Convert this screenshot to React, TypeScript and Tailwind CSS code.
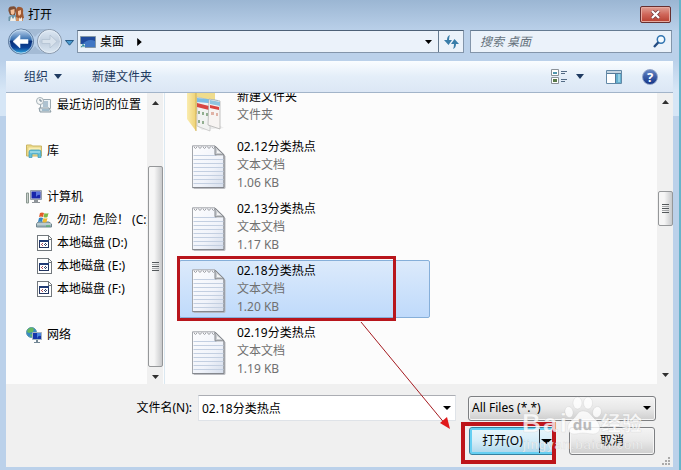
import React from "react";

const files = [
  { name: "02.12分类热点", size: "1.06 KB" },
  { name: "02.13分类热点", size: "1.17 KB" },
  { name: "02.18分类热点", size: "1.20 KB", selected: true },
  { name: "02.19分类热点", size: "1.19 KB" },
];

function Triangle({ className = "", up = false }: { className?: string; up?: boolean }) {
  return (
    <svg className={"shrink-0 " + className} viewBox="0 0 8 4" preserveAspectRatio="none" fill="currentColor">
      <path d={up ? "M0 4h8L4 0z" : "M0 0h8L4 4z"} />
    </svg>
  );
}

function NotepadIcon() {
  return (
    <svg className="mt-[10px] h-[44px] w-[34px] shrink-0" viewBox="0 0 34 44">
      <defs>
        <linearGradient id="paper" x1="0" y1="0" x2="1" y2="1">
          <stop offset="0" stopColor="#fdfdfe" />
          <stop offset=".6" stopColor="#f0f3fa" />
          <stop offset="1" stopColor="#d5ddeb" />
        </linearGradient>
      </defs>
      <path d="M2 43.3H33V11" fill="none" stroke="#b9bbc0" />
      <path d="M.5.8H23l9 9v33H.5z" fill="url(#paper)" stroke="#a3a6ab" />
      <path d="M.5 42.5H32V10" fill="none" stroke="#85888e" />
      <path d="M1.5 10.5h23m-23 4h30m-30 4h30m-30 4h30m-30 4h30m-30 4h30m-30 4h30m-30 4h30" stroke="#c3cfe1" fill="none" />
      <path d="M23 1v8.8h9z" fill="#c9ccd0" stroke="#83868b" />
      <path d="M25 5v3h4z" fill="#f5f5f5" />
      <path d="M2 1.5q1.5 4 3 0m1.5 0q1.5 4 3 0m1.5 0q1.5 4 3 0m1.5 0q1.5 4 3 0m1.5 0q1.5 4 3 0" fill="none" stroke="#96999e" strokeWidth=".9" />
    </svg>
  );
}

function FolderIcon() {
  return (
    <svg className="-ml-1 h-[58px] w-[38px] shrink-0" viewBox="0 0 38 58">
      <defs>
        <linearGradient id="flap" x1="0" y1="0" x2="1" y2="0">
          <stop offset="0" stopColor="#faecaf" /><stop offset="1" stopColor="#efd274" />
        </linearGradient>
      </defs>
      <path d="M10 52l20-2 7 4-22 2z" fill="#ececec" />
      <path d="M8 8h20v32H8z" fill="#efdc8d" />
      <path d="M10 23l13 3v31l-13-5z" fill="#f1f2f1" stroke="#bdbdbd" strokeWidth=".7" />
      <path d="M10 24l21 2v4l-21-2z" fill="#7bbde5" />
      <path d="M10 29l12 3v4l-12-3z" fill="#d84743" />
      <path d="M12 37v3m4-2v3m4-2v3m-8 4v3m4-2v3" stroke="#7b9d78" strokeWidth="1.6" />
      <path d="M22 25l11 2v28l-12-4z" fill="#f7f4f2" stroke="#a9a9a9" strokeWidth=".7" />
      <path d="M23 26l10 2v4l-10-2z" fill="#8fc4df" />
      <path d="M23 31l9 2v3l-9-2z" fill="#d9433e" />
      <path d="M24 38h3v3h-3zm5 1h2v3h-2z" fill="#e0b3a6" />
      <path d="M0 4h9v53L0 45z" fill="url(#flap)" />
      <path d="M9 5v52" stroke="#d0b258" />
    </svg>
  );
}

function PeopleIcon() {
  return (
    <svg className="h-4 w-4 shrink-0" viewBox="0 0 16 16">
      <path d="M.5 15V11l3-2h4l2 3v3z" fill="#6993a7" />
      <path d="M8 15v-5l3-1 4 2v4z" fill="#cf9063" />
      <path d="M.5 5Q0 0 4 .5q5-1 4 4.500L7 9H2z" fill="#7f4f35" />
      <path d="M8 11V4q1-4 4-3 4 0 3 6l1 5-3 1z" fill="#9e5932" />
      <path d="M2.500 4l4-1v4L5 9 3 8z" fill="#f4c29b" />
      <path d="M10 5l3-1v4l-2 2-1-2z" fill="#f6c4a0" />
      <path d="M3 10l2 3 2-3 1 5H2zm8 1l1 2 2-2v4h-3z" fill="#f3eee5" />
    </svg>
  );
}

function NavCircles() {
  return (
    <svg className="h-[27px] w-[56px] shrink-0" viewBox="0 0 56 27">
      <defs>
        <linearGradient id="back" x1="0" y1="0" x2="0" y2="1">
          <stop offset="0" stopColor="#c5d9ef" /><stop offset=".42" stopColor="#3971b1" />
          <stop offset=".5" stopColor="#062d78" /><stop offset=".75" stopColor="#0d459a" /><stop offset="1" stopColor="#35b5e7" />
        </linearGradient>
        <linearGradient id="forward" x1="0" y1="0" x2="0" y2="1">
          <stop offset="0" stopColor="#dfeaf5" /><stop offset=".5" stopColor="#bfcddd" /><stop offset="1" stopColor="#dce8f3" />
        </linearGradient>
      </defs>
      <path d="M13 1H43Q32 3 28 9q-4-6-15-8zm0 25h30q-11-2-15-8-4 6-15 8z" fill="#92a9c3" opacity=".55" />
      <circle cx="14" cy="13.5" r="12.5" fill="url(#back)" stroke="#657f9e" />
      <circle cx="14" cy="13.5" r="11.6" fill="none" stroke="#c8dff2" strokeWidth=".8" />
      <path d="M6 13.5l7-6.5v4.5h8v4h-8V20z" fill="white" stroke="#e8f3ff" strokeWidth=".6" />
      <circle cx="42.5" cy="13.5" r="12" fill="url(#forward)" stroke="#8292a6" />
      <circle cx="42.5" cy="13.5" r="11" fill="none" stroke="#e4edf6" />
      <path d="M50 13.5L43 7v4.5h-8v4h8V20z" fill="#d8e2ec" stroke="#b3c2d2" strokeWidth=".8" />
    </svg>
  );
}

function DesktopIcon() {
  return (
    <svg className="h-3 w-4 shrink-0" viewBox="0 0 16 12">
      <path d="M.5.5h15v11H.5z" fill="#2d5cab" stroke="#8297a8" />
      <path d="M1 1h14v4Q8 3 1 8z" fill="#1f4a9c" />
      <path d="M3 8q5-6 12-3v6H5z" fill="#4076c4" />
      <path d="M0 8h5v4H0z" fill="#dae7ec" /><path d="M1 11l3-2m-2 0h2v2" stroke="#228594" fill="none" />
    </svg>
  );
}

function DriveIcon() {
  return (
    <svg className="ml-px h-4 w-[15px] shrink-0" viewBox="0 0 15 16" shapeRendering="crispEdges">
      <path d="M.5.5h11l3 3v12H.5z" fill="#fff" stroke="#72787d" />
      <path d="M11.500.5V4h3" fill="none" stroke="#72787d" />
      <path d="M2.500 5.500h9v7h-9z" fill="#fff" stroke="#22345f" />
      <path d="M2 5h10v2H2z" fill="#213b75" />
      <path d="M4 9h1v1H4zm1 1h1v1H5zm0-2h1v1H5z" fill="#b04d5c" />
      <path d="M8 8h1v1H8zm-1 1h1v1H7zm2 0h1v1H9zm-1 1h1v1H8z" fill="#34466f" />
    </svg>
  );
}

function RecentIcon() {
  return (
    <svg className="h-4 w-4 shrink-0" viewBox="0 0 16 16">
      <path d="M4.5 2.5h10v9h-10z" fill="#edf3f6" stroke="#9ca9b1" />
      <path d="M7 5h5m-5 2h5m-5 2h5" stroke="#6e91aa" />
      <path d="M3 11h10l2 4H4z" fill="#dce5e9" stroke="#8999a3" /><path d="M6 13h7" stroke="#6792ae" />
      <circle cx="4" cy="4" r="3.5" fill="#f4f6f6" stroke="#a5b1b7" /><path d="M4 2v2h2" fill="none" stroke="#667d8c" />
    </svg>
  );
}

function LibraryIcon() {
  return (
    <svg className="h-4 w-4 shrink-0" viewBox="0 0 16 16">
      <path d="M.5 13V2h5l1 1h9v10z" fill="#f2df88" stroke="#c9b464" />
      <path d="M2 4h13v8H2z" fill="#fbefb1" stroke="#dac87c" strokeWidth=".7" />
      <path d="M3 14.500V9q0-2 2-2h8q2 0 2 2v5.500h-3V11H6v3.500z" fill="#66bfd8" stroke="#3c98b6" strokeWidth=".7" />
      <path d="M4 9h10" stroke="#bdeaf0" />
    </svg>
  );
}

function ComputerIcon() {
  return (
    <svg className="h-4 w-4 shrink-0" viewBox="0 0 16 16">
      <path d="M.5 4h2v10h-2z" fill="#cbd1ce" stroke="#8a9890" />
      <path d="M4.500 1.500h11v9h-11z" fill="#d4d8da" stroke="#969eaa" />
      <path d="M5.500 2.500h9v7h-9z" fill="#1725ab" /><path d="M10 3h4v3q-2-1-4 2z" fill="#5874dc" />
      <path d="M8 11h4v2h2v1H6v-1h2z" fill="#8e9499" />
    </svg>
  );
}

function SystemDriveIcon() {
  return (
    <svg className="h-4 w-4 shrink-0" viewBox="0 0 16 16">
      <path d="M2 10h11l2.500 2v3H.5v-3z" fill="#9eb4bb" stroke="#6f848e" />
      <path d="M1 12h14" stroke="#d7e3e4" /><path d="M10 14h4" stroke="#48af61" />
      <path d="M4 1q2-1 4 0L7 5q-2-1-4 0z" fill="#e35d2b" />
      <path d="M8.500 1q2 1 4 0l-1 4q-2 1-4 0z" fill="#80b947" />
      <path d="M3 6q2-1 4 0l-1 4q-2-1-4 0z" fill="#3686c3" />
      <path d="M7.500 6q2 1 4 0l-1 4q-2 1-4 0z" fill="#efba30" />
    </svg>
  );
}

function NetworkIcon() {
  return (
    <svg className="h-4 w-4 shrink-0" viewBox="0 0 16 16">
      <circle cx="5.500" cy="5.500" r="5" fill="#378bc4" stroke="#5b98ae" />
      <path d="M2 2q4-3 6 0L7 5 3 6 1 5zm2 5l4 1-3 2z" fill="#66b760" />
      <path d="M6.500 5.500h9v7h-9z" fill="#1535aa" stroke="#a7b5be" />
      <path d="M11 6h4v3q-3-1-4 3z" fill="#4a84dd" />
      <path d="M10 13h2v2h2v1H8v-1h2z" fill="#738795" />
    </svg>
  );
}

function TreeRow({ icon, children, child = false }: { icon: React.ReactNode; children: React.ReactNode; child?: boolean }) {
  return (
    <div className={"flex h-[23px] items-center gap-[5px] whitespace-nowrap " + (child ? "pl-[30px]" : "pl-5")}>
      {icon}
      <span>{children}</span>
    </div>
  );
}

function Grip() {
  return (
    <span className="flex flex-col gap-px">
      <i className="h-px w-[7px] bg-[#54585b]" /><i className="h-px w-[7px] bg-[#a4a6a8]" />
      <i className="h-px w-[7px] bg-[#54585b]" /><i className="h-px w-[7px] bg-[#a4a6a8]" />
      <i className="h-px w-[7px] bg-[#54585b]" />
    </span>
  );
}

function Thumb({ className }: { className: string }) {
  return (
    <div className={"flex w-[15px] shrink-0 items-center justify-center rounded-[2px] border border-[#959799] bg-linear-to-r from-[#f6f6f6] from-40% to-[#c8c9cb] " + className}>
      <Grip />
    </div>
  );
}

function Toolbar() {
  return (
    <div className="flex h-8 shrink-0 items-center border-b border-[#a2b4c9] bg-linear-to-b from-[#fafdff] via-[#e4eef9] via-50% to-[#dce7f5] text-[#1f3b61]">
      <span className="ml-[18px]">组织</span>
      <Triangle className="ml-[6px] h-[5px] w-2" />
      <span className="ml-[30px]">新建文件夹</span>
      <svg className="ml-auto h-4 w-4" viewBox="0 0 16 16">
        <path d="M.5.5h7v6h-7zm0 8h7v6h-7z" fill="#fff" stroke="#8b9298" />
        <path d="M2 3h4v2H2z" fill="#5196ae" /><path d="M2 10h4v3H2z" fill="#587947" />
        <path d="M10 2.500h6m-6 2h4m-4 6h6m-6 2h4" stroke="#536b85" />
      </svg>
      <Triangle className="ml-[9px] h-[5px] w-2" />
      <svg className="ml-[22px] h-[14px] w-4" viewBox="0 0 16 14">
        <path d="M.5.5h15v13H.5z" fill="white" stroke="#6289a7" /><path d="M1 1h14v2H1z" fill="#c5d6e3" />
        <path d="M10 3h5v10h-5z" fill="#65b0cf" /><path d="M12 4h2v8h-2z" fill="#95d0e4" /><path d="M9.500 3v10M1 3.500h14" stroke="#557b99" />
      </svg>
      <div className="mr-[15px] ml-5 flex h-4 w-4 items-center justify-center rounded-full border border-[#8da0c6] bg-linear-to-b from-[#6585c4] to-[#143488] text-[13px] font-bold text-white">?</div>
    </div>
  );
}

function Sidebar() {
  return (
    <div className="flex w-[159px] shrink-0 border-r border-[#dbe8f1]">
      <div className="w-[141px] overflow-hidden">
        <TreeRow child icon={<RecentIcon />}>最近访问的位置</TreeRow>
        <div className="mt-[23px]"><TreeRow icon={<LibraryIcon />}>库</TreeRow></div>
        <div className="mt-[23px]"><TreeRow icon={<ComputerIcon />}>计算机</TreeRow></div>
        <TreeRow child icon={<SystemDriveIcon />}>勿动！危险！ (C:)</TreeRow>
        <TreeRow child icon={<DriveIcon />}>本地磁盘 (D:)</TreeRow>
        <TreeRow child icon={<DriveIcon />}>本地磁盘 (E:)</TreeRow>
        <TreeRow child icon={<DriveIcon />}>本地磁盘 (F:)</TreeRow>
        <div className="mt-[23px]"><TreeRow icon={<NetworkIcon />}>网络</TreeRow></div>
      </div>
      <div className="flex w-4 flex-col items-center bg-[#f0f0f0] text-[#303030]">
        <Triangle up className="mt-2 h-[4px] w-[7px]" />
        <Thumb className="mt-[61px] h-[201px]" />
        <Triangle className="mt-2 h-[4px] w-[7px]" />
      </div>
    </div>
  );
}

function FileList() {
  return (
    <div className="flex min-w-0 flex-1">
      <div className="flex-1 overflow-hidden pl-[14px]">
        <div className="-mt-[19px] flex h-[62px] pl-3">
          <FolderIcon />
          <div className="ml-3 leading-[18px] text-[#707070]"><div className="pt-[14px] text-black">新建文件夹</div><div>文件夹</div></div>
        </div>
        {files.map((f) => (
          <div key={f.name} className={"mb-1 flex h-[58px] w-[251px] rounded-[2px] border pl-3 leading-[18px] text-[#707070] " + (f.selected ? "border-[#86afd9] bg-linear-to-b from-[#dceafb] to-[#bfdafb]" : "border-transparent")}>
            <div className="-mt-[2px]"><NotepadIcon /></div>
            <div className="ml-[11px] pt-px"><div className="text-black">{f.name}</div><div>文本文档</div><div>{f.size}</div></div>
          </div>
        ))}
      </div>
      <div className="flex w-4 shrink-0 flex-col items-center bg-[#f0f0f0] text-[#303030]">
        <Triangle up className="mt-[7px] h-[4px] w-[7px]" />
        <Thumb className="mt-[87px] h-[35px]" />
        <Triangle className="mt-[147px] h-[4px] w-[7px]" />
      </div>
    </div>
  );
}

function Watermark() {
  return (
    <div className="pointer-events-none absolute top-[394px] left-[522px] h-[66px] w-[126px]">
      <svg className="h-[66px] w-[126px]" viewBox="0 0 126 66" fill="white" fillOpacity=".8" stroke="#999" strokeOpacity=".25" strokeWidth=".6">
        <ellipse cx="47" cy="18" rx="4" ry="5.500" transform="rotate(-12 47 18)" />
        <ellipse cx="55.500" cy="9" rx="4.500" ry="6" /><ellipse cx="66" cy="9" rx="4.500" ry="6" />
        <ellipse cx="75" cy="18" rx="4.300" ry="5.500" transform="rotate(15 75 18)" />
        <path d="M61 17c-6 0-6 6-11 9-7 5-5 14 2 14 4 0 6-1 9-1s6 1 10 1c8 0 9-8 3-14-5-4-6-9-13-9z" />
        <text x="51" y="36" fontSize="15" fontWeight="700" fontFamily="Liberation Sans, sans-serif" textLength="19" fill="#aaa">du</text>
        <text x="0" y="38" fontSize="26" fontWeight="700" fontFamily="Liberation Sans, sans-serif" textLength="45">Bai</text>
        <text x="79" y="37" fontSize="20" fontWeight="700" fontFamily="Noto Sans CJK SC, sans-serif" textLength="41">经验</text>
        <text x="1" y="55" fontSize="13" fontFamily="Liberation Sans, sans-serif" textLength="120">jingyan.baidu.com</text>
      </svg>
    </div>
  );
}

function Footer() {
  return (
    <div className="flex h-[83px] shrink-0 flex-col bg-[#f0f0f0] pt-[11px] text-black">
      <div className="flex items-center">
        <span className="w-[192px] pr-[6px] text-right">文件名(N):</span>
        <div className="flex h-[26px] w-[258px] items-center justify-between border border-[#dfe3e8] border-t-[#abadb3] bg-white pr-1 pl-[3px]">
          <span className="pt-px">02.18分类热点</span><Triangle className="h-1 w-2" />
        </div>
        <div className="ml-3 flex h-[25px] w-[188px] items-center justify-between rounded-[3px] border border-[#7d7f82] bg-linear-to-b from-[#f4f4f4] via-[#e8e8e8] via-50% to-[#cecece] pr-1 pl-[3px] shadow-[inset_0_0_0_1px_#f6f6f6]">
          <span>All Files (*.*)</span><Triangle className="h-1 w-2" />
        </div>
      </div>
      <div className="mt-[6px] ml-[463px] flex">
        <div className="flex h-[28px] w-[86px] items-center rounded-[3px] border border-[#36819f] bg-linear-to-b from-[#eaf6fb] via-[#d5edf8] via-50% to-[#a9d5ea] shadow-[inset_0_0_0_2px_#65cff2]">
          <span className="w-[69px] pr-1 text-center">打开(O)</span>
          <i className="h-6 w-px bg-[#303a40]" />
          <Triangle className="ml-px h-[5px] w-[11px]" />
        </div>
        <div className="ml-[14px] flex h-[28px] w-[86px] items-center justify-center rounded-[3px] border border-[#7d7f82] bg-linear-to-b from-[#f4f4f4] via-[#e8e8e8] via-50% to-[#cecece] shadow-[inset_0_0_0_1px_#f6f6f6]">取消</div>
      </div>
      <svg className="mt-[2px] mr-[3px] ml-auto h-[9px] w-[9px]" viewBox="0 0 9 9" fill="#aaa"><path d="M7 0h2v2H7zM4 3h2v2H4zm3 0h2v2H7zM1 6h2v2H1zm3 0h2v2H4zm3 0h2v2H7z" /></svg>
    </div>
  );
}

export default function App() {
  return (
    <div className="relative h-[470px] w-[681px] overflow-hidden border-r-2 border-[#66b3ca] font-['Noto_Sans','Noto_Sans_CJK_SC',sans-serif] text-[12px] leading-[18px] text-black">
      <div className="flex h-[470px] w-[679px] flex-col bg-[linear-gradient(#9bb6d3,#bbd1ea_32px,#bbd1ea_61px,#d6e6f6_90px,#d6e6f6_116px,#bbd1ea_116px)]">
        <div className="flex h-7 shrink-0 items-center pl-2">
          <PeopleIcon />
          <span className="ml-1 pt-px">打开</span>
          <div className="mr-2 ml-auto flex h-[17px] w-[31px] items-center justify-center rounded-[2px] border border-[#672f30] bg-linear-to-b from-[#dfa096] via-[#cf6659] via-50% to-[#b63e2f] shadow-[inset_0_0_0_1px_#e6aaa0]">
            <svg className="h-[9px] w-[11px]" viewBox="0 0 11 9"><path d="M2 1l7 7M9 1L2 8" stroke="#753d42" strokeWidth="3.800" /><path d="M2 1l7 7M9 1L2 8" stroke="white" strokeWidth="2.200" /></svg>
          </div>
        </div>
        <div className="flex h-[33px] shrink-0 pl-[7px]">
          <NavCircles />
          <svg className="mt-3 ml-[2px] h-[6px] w-[9px]" viewBox="0 0 9 6"><path d="M.5.5h8l-4 4.700z" fill="#4c9bd0" stroke="#255985" /></svg>
          <div className="mt-[2px] ml-[3px] flex h-[23px] w-[387px] items-center border border-[#8395aa] border-t-[#4d6177] bg-[#ebf2fa] pl-[2px]">
            <DesktopIcon />
            <span className="ml-1">桌面</span>
            <svg className="ml-[13px] h-[8px] w-[5px]" viewBox="0 0 4 7"><path d="M0 0v7l4-3.500z" /></svg>
            <Triangle className="mr-[6px] ml-auto h-1 w-[7px]" />
            <div className="flex h-full w-[25px] items-center justify-center border-l border-[#64798f]">
              <svg className="h-[14px] w-[15px]" viewBox="0 0 15 14" fill="#397da9"><path d="M6 0Q3 1 3 5H0l4.500 5L8 5H5Q5 2 6 0zM9 14q3-1 3-5h3l-4.500-5L7 9h3q0 3-1 5z" /></svg>
            </div>
          </div>
          <div className="mt-[2px] ml-[6px] flex h-[23px] w-[202px] items-center border border-[#8395aa] border-t-[#657b92] bg-[#ebf2fa] pr-[5px] pl-[9px] text-[#66727d]">
            <span className="italic">搜索 桌面</span>
            <svg className="ml-auto h-[13px] w-[13px]" viewBox="0 0 13 13"><circle cx="8" cy="4.500" r="3.700" fill="#f5fbff" stroke="#3275b1" strokeWidth="1.500" /><path d="M5.400 7.300L1 12" stroke="#244c83" strokeWidth="2.400" /></svg>
          </div>
        </div>
        <div className="mr-[6px] ml-[6px] flex h-[406px] shrink-0 flex-col">
          <Toolbar />
          <div className="flex h-[291px] shrink-0 bg-[#fcfcfc]">
            <Sidebar />
            <FileList />
          </div>
          <Footer />
        </div>
      </div>
      <div className="absolute top-[256px] left-[177px] h-[65px] w-[219px] border-[3px] border-[#b8161c]" />
      <div className="absolute top-[422px] left-[461px] h-[42px] w-[95px] border-4 border-[#bd151a]" />
      <svg className="absolute top-[320px] left-[358px] h-[112px] w-[96px]" viewBox="358 320 96 112">
        <path d="M361 322L446 425" stroke="#a51b20" strokeWidth="1" /><path d="M450 429l-10-6 7-6z" fill="#e0191b" />
      </svg>
      <Watermark />
    </div>
  );
}
